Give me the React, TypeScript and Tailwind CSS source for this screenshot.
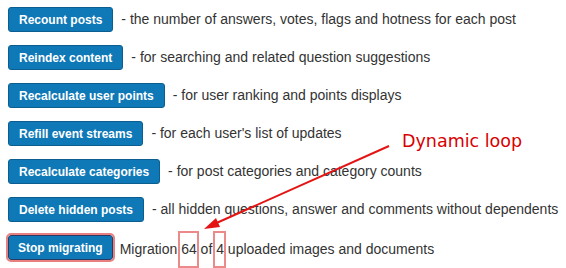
const ROWS = [
  { label: 'Recount posts', note: '- the number of answers, votes, flags and hotness for each post' },
  { label: 'Reindex content', note: '- for searching and related question suggestions' },
  { label: 'Recalculate user points', note: '- for user ranking and points displays' },
  { label: 'Refill event streams', note: "- for each user's list of updates" },
  { label: 'Recalculate categories', note: '- for post categories and category counts' },
  { label: 'Delete hidden posts', note: '- all hidden questions, answer and comments without dependents' },
]

// highlighted value with a red annotation frame
function Boxed({ children }: { children: string }) {
  return (
    <span className="relative inline-block">
      {children}
      <span className="absolute top-[-8px] bottom-[-8px] left-[-3px] right-[-2px] border-2 border-[#ec8a8a]" />
    </span>
  )
}

export default function App() {
  return (
    <div className="relative w-[566px] h-[268px] bg-white overflow-hidden font-['Liberation_Sans',Arial,sans-serif]">
      <div className="flex flex-col gap-[13px] pl-2 pt-[7px]">
        {ROWS.map((row) => (
          <div key={row.label} className="flex items-center gap-[8px]">
            <button className="h-[25px] px-[10px] rounded-[3px] bg-[#0f78b6] border border-[#0b5e90] text-white text-[12px] font-bold leading-none">
              {row.label}
            </button>
            <span className="text-[14px] text-[#333]">{row.note}</span>
          </div>
        ))}

        {/* last row: migration in progress */}
        <div className="flex items-center gap-[7px]">
          <button className="h-[25px] px-[9px] rounded-[3px] bg-[#0f78b6] border border-[#283a66] outline-2 outline-[#e88080] text-white text-[12px] font-bold leading-none">
            Stop migrating
          </button>
          <span className="relative top-[2px] text-[14px] text-[#333] whitespace-pre">
            Migration <Boxed>64</Boxed> of <Boxed>4</Boxed> uploaded images and documents
          </span>
        </div>
      </div>

      {/* annotation */}
      <span className="absolute left-[402px] top-[133px] text-[17.5px] leading-none text-[#d80000] font-['DejaVu_Sans',Verdana,sans-serif]">
        Dynamic loop
      </span>
      <svg className="absolute left-0 top-0" width="566" height="268">
        <line x1="389" y1="146" x2="212" y2="225" stroke="#e41414" strokeWidth="2" />
        <polygon points="204,229 216,218 220,227" fill="#e41414" />
      </svg>
    </div>
  )
}
